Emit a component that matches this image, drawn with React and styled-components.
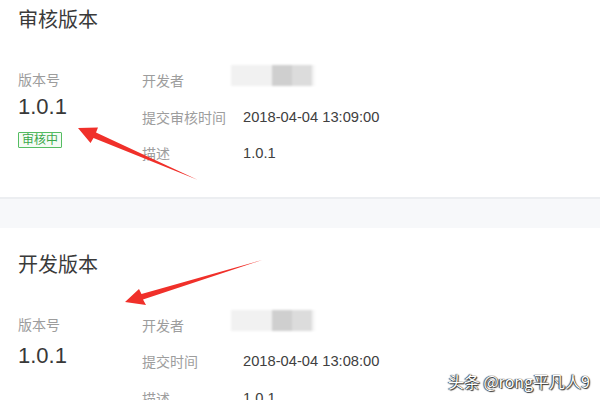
import React from 'react';
import styled, { createGlobalStyle } from 'styled-components';

const GlobalStyle = createGlobalStyle`
    html, body {
        margin: 0;
        padding: 0;
        background: #ffffff;
    }
    body {
        font-family: "Liberation Sans", "Noto Sans CJK SC", sans-serif;
        overflow: hidden;
    }
    #root {
        position: relative;
        width: 600px;
        height: 400px;
        overflow: hidden;
    }
`;

const Page = styled.div`
    margin-top: -17px;
`;

const Panel = styled.section`
    background: #ffffff;
    padding: 23px 18px ${(p) => (p.last ? '0' : '25px')};
    border-bottom: ${(p) => (p.last ? 'none' : '2px solid #eceef1')};
`;

const Band = styled.div`
    height: 29px;
    background: #f7f8fa;
`;

const Title = styled.h2`
    margin: 0;
    font-size: 20px;
    line-height: 28px;
    font-weight: 400;
    color: #3a3a3a;
`;

const Body = styled.div`
    display: flex;
    margin-top: 28px;
`;

const VersionCol = styled.div`
    width: 124px;
    display: flex;
    flex-direction: column;
    align-items: flex-start;
    padding-top: 8px;
`;

const Label = styled.div`
    font-size: 14px;
    line-height: 20px;
    color: #9d9d9d;
`;

const Version = styled.div`
    font-size: 22px;
    line-height: 26px;
    margin-top: ${(p) => p.$gap}px;
    color: #383838;
`;

const Badge = styled.span`
    margin-top: 12px;
    height: 14px;
    line-height: 14px;
    padding: 0 3px;
    font-size: 12px;
    color: #3aa84a;
    background: #f5fbf5;
    border: 1px solid #55bd62;
    border-radius: 1px;
`;

const InfoList = styled.div`
    display: flex;
    flex-direction: column;
`;

const Row = styled.div`
    display: flex;
    align-items: center;
    height: 36.5px;
`;

const Key = styled.div`
    width: 101px;
    font-size: 14px;
    color: #9d9d9d;
`;

const Value = styled.div`
    font-size: 14.7px;
    color: #404040;
`;

const Blurred = styled.div`
    width: 84px;
    height: 21px;
    margin-left: -12px;
    margin-bottom: 9px;
    background: linear-gradient(
        to right,
        #f1f1f1 0 49%,
        #cfcfcf 49% 73%,
        #dcdcdc 73% 96%,
        #f6f6f6 96% 100%
    );
    filter: blur(1.2px);
`;

const Overlay = styled.svg`
    position: absolute;
    left: 0;
    top: 0;
    width: 600px;
    height: 400px;
    pointer-events: none;
`;

const Watermark = styled.div`
    position: absolute;
    right: 10px;
    bottom: 9px;
    font-size: 16px;
    line-height: 20px;
    color: #ffffff;
    font-family: "Noto Sans CJK SC", "Liberation Sans", sans-serif;
    text-shadow: 0 0 1px #000, 1px 1px 1px #333, -1px 0 1px #555;
`;

function VersionPanel({ title, badge, timeLabel, time, gap, last }) {
    return (
        <Panel last={last}>
            <Title>{title}</Title>
            <Body>
                <VersionCol>
                    <Label>版本号</Label>
                    <Version $gap={gap}>1.0.1</Version>
                    {badge && <Badge>{badge}</Badge>}
                </VersionCol>
                <InfoList>
                    <Row>
                        <Key>开发者</Key>
                        <Blurred />
                    </Row>
                    <Row>
                        <Key>{timeLabel}</Key>
                        <Value>{time}</Value>
                    </Row>
                    <Row>
                        <Key>描述</Key>
                        <Value>1.0.1</Value>
                    </Row>
                </InfoList>
            </Body>
        </Panel>
    );
}

export default function App() {
    return (
        <>
            <GlobalStyle />
            <Page>
                <VersionPanel
                    title="审核版本"
                    badge="审核中"
                    timeLabel="提交审核时间"
                    time="2018-04-04 13:09:00"
                    gap={4}
                />
                <Band />
                <VersionPanel
                    title="开发版本"
                    timeLabel="提交时间"
                    time="2018-04-04 13:08:00"
                    gap={8}
                    last
                />
            </Page>
            <Overlay viewBox="0 0 600 400">
                <polygon
                    points="78,128 98,127.5 96,132.5 198,180 93.5,138 90.5,143"
                    fill="#f0302a"
                />
                <polygon
                    points="125,302 139,289 141.5,294 262,260 143,299.5 146,305"
                    fill="#f0302a"
                />
            </Overlay>
            <Watermark>头条 @rong平凡人9</Watermark>
        </>
    );
}
